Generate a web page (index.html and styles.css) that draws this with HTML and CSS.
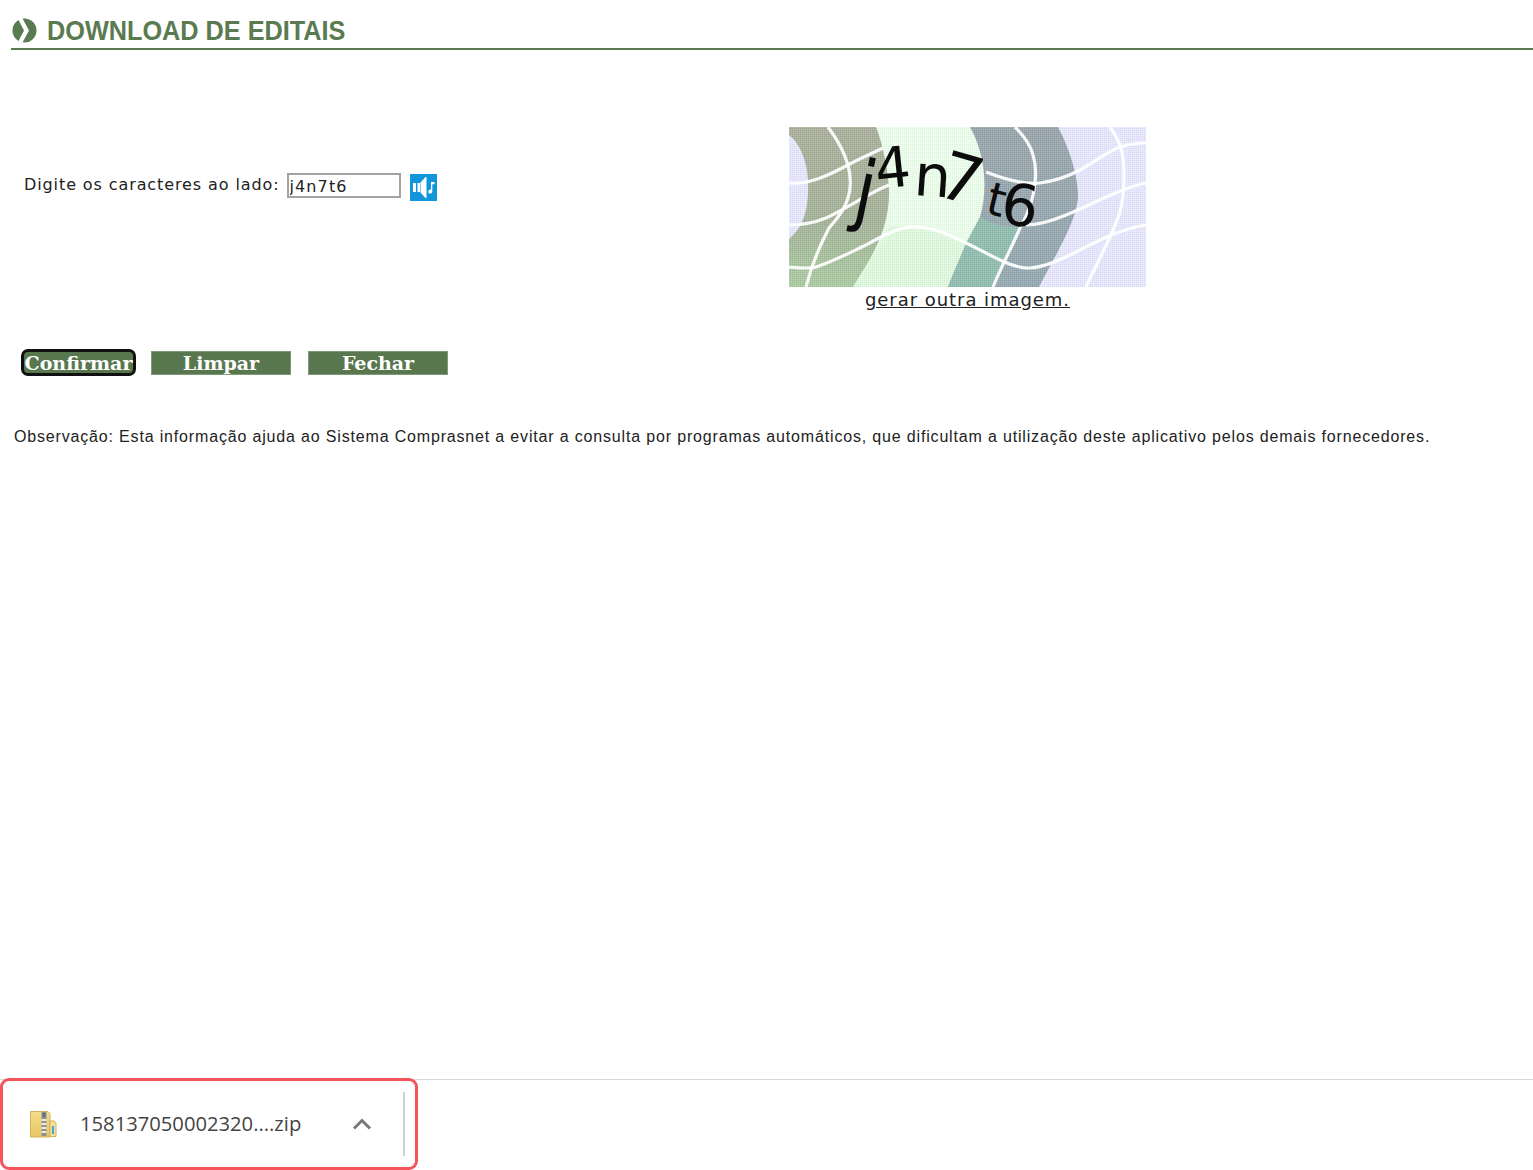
FILE: index.html
```html
<!DOCTYPE html>
<html lang="pt-BR">
<head>
<meta charset="utf-8">
<title>Download de Editais</title>
<link rel="stylesheet" href="styles.css">
</head>
<body>
<main class="page">
  <h1 class="title">
    <svg class="title-icon" viewBox="0 0 25 25" aria-hidden="true">
      <circle cx="12.5" cy="12.5" r="12" fill="#5a7a50"/>
      <path d="M6 1 L12 12.5 L6 24 L10.5 24.5 L17 12.5 L10.5 .5 Z" fill="#fff"/>
    </svg>
    <span class="title-text">DOWNLOAD DE EDITAIS</span>
  </h1>

  <section class="captcha-row">
    <div class="captcha-entry">
      <label class="captcha-label" for="cap">Digite os caracteres ao lado:</label>
      <input class="captcha-input" id="cap" type="text" value="j4n7t6">
      <svg class="audio-icon" viewBox="0 0 27 27" aria-hidden="true">
        <rect width="27" height="27" fill="#1296db"/>
        <path d="M3 9h3v9H3z M7.5 9H10v9H7.5z M10.5 8.5 L15.5 3 H16.5 V24 H15.5 L10.5 18.5 Z" fill="#fff"/>
        <path d="M21 8h1.3v9.5a2 2 0 1 1-1.3-1.8z M22 8h2.5v2.2H22z" fill="#fff"/>
      </svg>
    </div>
    <div class="captcha-box">
      <svg class="captcha-img" viewBox="0 0 357 160" role="img" aria-label="captcha">
        <defs>
          <pattern id="dith" width="2" height="2" patternUnits="userSpaceOnUse">
            <rect width="1" height="1" fill="#fff" opacity=".22"/>
            <rect x="1" y="1" width="1" height="1" fill="#000" opacity=".05"/>
          </pattern>
          <linearGradient id="gBand" x1="0" y1="0" x2="0" y2="1">
            <stop offset="0" stop-color="#98a4aa"/>
            <stop offset=".55" stop-color="#96a6ae"/>
            <stop offset="1" stop-color="#93a8b0"/>
          </linearGradient>
          <linearGradient id="oBand" x1="0" y1="0" x2="0" y2="1">
            <stop offset="0" stop-color="#a9ae9a"/>
            <stop offset=".6" stop-color="#a3b298"/>
            <stop offset="1" stop-color="#a9cba0"/>
          </linearGradient>
        </defs>
        <rect width="357" height="160" fill="#e6e6fc"/>
        <path d="M87 0 H181 C195 25 200 60 191 90 C185 105 170 130 159 160 H64 C75 140 100 110 100 66 C100 50 95 20 87 0 Z" fill="#ebfdeb"/>
        <path d="M64 160 C75 140 90 118 100 100 C130 95 160 105 177 116 L159 160 Z" fill="#dff9df"/>
        <path d="M0 0 H87 C95 20 100 50 100 66 C100 110 75 140 64 160 H0 V112 C15 100 20 80 19 55 C19 35 10 15 0 8 Z" fill="url(#oBand)"/>
        <path d="M181 0 H269 C285 30 290 60 289 72 C285 100 265 130 250 160 H159 C170 130 185 105 191 90 C200 60 195 25 181 0 Z" fill="url(#gBand)"/>
        <path d="M191 90 L177 116 L159 160 H204 L231 101 C215 100 200 96 191 90 Z" fill="#8fbcae"/>
        <rect width="357" height="160" fill="url(#dith)"/>
        <g class="cap-grid">
          <path d="M0 56 C20 58 40 48 59 38 C72 31 82 27 94 21"/>
          <path d="M39 0 C48 12 55 24 59 38 C62 50 62 62 59 71 C56 82 48 92 40 101 C30 120 22 140 17 160"/>
          <path d="M0 98 C15 98 27 95 37 91 C60 80 80 66 100 58"/>
          <path d="M0 140 C12 141 20 142 27 140 C45 134 62 125 77 118 C95 108 110 100 124 100 C145 100 160 108 177 116 C190 122 200 128 211 133 C222 138 232 142 241 141 C255 140 268 134 281 128 C305 116 330 102 357 98"/>
          <path d="M226 0 C236 10 242 20 244 28 C247 38 247 47 246 55 C245 70 240 85 231 101 C222 122 212 140 204 160"/>
          <path d="M197 45 C215 52 235 58 251 56 C265 54 278 50 291 43 C305 35 318 25 331 20 C340 17 348 16 357 16"/>
          <path d="M237 98 C250 98 265 93 277 88 C297 80 315 70 334 63 C342 60 350 57 357 56"/>
          <path d="M321 0 C328 10 333 20 334 31 C336 50 335 68 331 85 C323 110 308 135 297 160"/>
        </g>
        <g class="cap-letters">
          <text x="0" y="0" font-size="80" transform="translate(62 88) rotate(12) scale(.85 1)">j</text>
          <text x="0" y="0" font-size="56" transform="translate(88 62) rotate(-6)">4</text>
          <text x="0" y="0" font-size="58" transform="translate(124 68) rotate(4)">n</text>
          <text x="0" y="0" font-size="66" transform="translate(146 68) rotate(16)">7</text>
          <text x="0" y="0" font-size="46" transform="translate(195 86) rotate(14)">t</text>
          <text x="0" y="0" font-size="58" transform="translate(210 96) rotate(8)">6</text>
        </g>
      </svg>
      <a class="captcha-link" href="#">gerar outra imagem.</a>
    </div>
  </section>

  <div class="actions">
    <button class="btn btn-focus" type="button">Confirmar</button>
    <button class="btn btn-limpar" type="button">Limpar</button>
    <button class="btn btn-fechar" type="button">Fechar</button>
  </div>

  <p class="note">Observação: Esta informação ajuda ao Sistema Comprasnet a evitar a consulta por programas automáticos, que dificultam a utilização deste aplicativo pelos demais fornecedores.</p>
</main>

<footer class="download-bar">
  <div class="download-item">
    <svg class="zip-icon" viewBox="0 0 27 28" aria-hidden="true">
      <defs>
        <linearGradient id="zipFill" x1="0" y1="0" x2="0" y2="1">
          <stop offset="0" stop-color="#f4de8a"/>
          <stop offset="1" stop-color="#e8c662"/>
        </linearGradient>
      </defs>
      <path d="M0.5 1.5 H18 L20 3.5 V27 H0.5 Z" fill="url(#zipFill)" stroke="#d2b05c"/>
      <path d="M20 11 H24 L26 13 V26.5 H20 Z" fill="#f5e29a" stroke="#d2b05c"/>
      <rect x="11.5" y="2" width="5" height="24" fill="#90908a"/>
      <path d="M11.5 9h5v2h-5z M11.5 13h5v2h-5z M11.5 17h5v2h-5z M11.5 21h5v2h-5z" fill="#ecece4"/>
      <rect x="12.5" y="3" width="3" height="4" fill="#5e6d9a"/>
      <rect x="22" y="16" width="2" height="8" fill="#4aa3d8"/>
    </svg>
    <span class="file-name">158137050002320....zip</span>
    <svg class="chevron" viewBox="0 0 20 12" aria-hidden="true">
      <path d="M2 10.5 L10 2.5 L18 10.5" fill="none" stroke="#787878" stroke-width="3"/>
    </svg>
    <span class="sep"></span>
  </div>
</footer>
</body>
</html>
```

FILE: styles.css
```css
* { box-sizing: border-box; }
html, body { height: 100%; }
body {
  margin: 0;
  height: 100vh;
  display: flex;
  flex-direction: column;
  overflow: hidden;
  background: #fff;
  color: #111;
  font-family: "Liberation Sans", Arial, sans-serif;
}
.page { flex: 1; min-height: 0; }

.title {
  margin: 0 0 0 11px;
  height: 50px;
  padding-top: 18px;
  border-bottom: 2px solid #5a7a50;
  display: flex;
  align-items: flex-start;
  color: #5a7a50;
  font-size: 28px;
  line-height: 26px;
  font-weight: bold;
}
.title-icon { width: 25px; height: 25px; margin-left: 1px; flex: none; }
.title-text {
  display: inline-block;
  margin-left: 10px;
  transform: scaleX(.902);
  transform-origin: left center;
  white-space: nowrap;
}

.captcha-row { display: flex; margin-top: 77px; align-items: flex-start; }
.captcha-entry {
  width: 789px;
  height: 116px;
  padding-left: 24px;
  display: flex;
  align-items: center;
}
.captcha-label {
  font-family: "DejaVu Sans", Verdana, sans-serif;
  font-size: 16px;
  letter-spacing: .9px;
  color: #222;
  white-space: nowrap;
  margin-bottom: 2px;
}
.captcha-input {
  width: 114px;
  height: 25px;
  margin-left: 7px;
  padding: 2px 1px 0;
  border: 2px solid #a3a3a3;
  font-family: "DejaVu Sans", Verdana, sans-serif;
  font-size: 16px;
  letter-spacing: 1.1px;
  color: #222;
  background: #fff;
  outline: none;
}
.audio-icon { width: 27px; height: 27px; margin: 4px 0 0 9px; }

.captcha-box { width: 357px; display: flex; flex-direction: column; align-items: center; }
.captcha-img { width: 357px; height: 160px; display: block; }
.cap-grid path { fill: none; stroke: #fff; stroke-width: 3.2; opacity: .92; }
.cap-letters text { font-family: "DejaVu Sans", sans-serif; fill: #0c0c0c; }
.captcha-link {
  font-family: "DejaVu Sans", Verdana, sans-serif;
  font-size: 18px;
  letter-spacing: .95px;
  line-height: 26px;
  color: #222;
  white-space: nowrap;
}

.actions { display: flex; align-items: center; margin: 36px 0 0 21px; }
.btn {
  height: 24px;
  width: 140px;
  padding: 1px 0 0;
  border: 1px solid #7f9a76;
  border-radius: 0;
  background: #58774f;
  color: #fff;
  font-family: "DejaVu Serif", Georgia, serif;
  font-weight: bold;
  font-size: 19px;
  line-height: 20px;
}
.btn-focus {
  width: 115px;
  height: 27px;
  border: 3px solid #111;
  border-radius: 7px;
}
.btn-limpar { margin-left: 15px; }
.btn-fechar { margin-left: 17px; }

.note {
  margin: 51px 0 0 14px;
  font-size: 16px;
  letter-spacing: .83px;
  line-height: 20px;
  color: #222;
  white-space: nowrap;
}

.download-bar {
  height: 91px;
  flex: none;
  border-top: 1px solid #d9d9d9;
  background: #fff;
  position: relative;
}
.download-item {
  position: absolute;
  left: 0;
  top: -2px;
  width: 418px;
  height: 92px;
  border: 3px solid #f4545a;
  border-radius: 9px;
  display: flex;
  align-items: center;
  padding-left: 27px;
  background: #fff;
}
.zip-icon { width: 27px; height: 28px; flex: none; }
.file-name {
  margin: 0 0 2px 23px;
  font-family: "Open Sans", "Noto Sans", sans-serif;
  font-size: 20.2px;
  color: #444;
  white-space: nowrap;
  width: 272px;
}
.chevron { width: 20px; height: 12px; flex: none; }
.sep { width: 2px; height: 64px; background: #cfcfcf; margin-left: 31px; flex: none; }
```
